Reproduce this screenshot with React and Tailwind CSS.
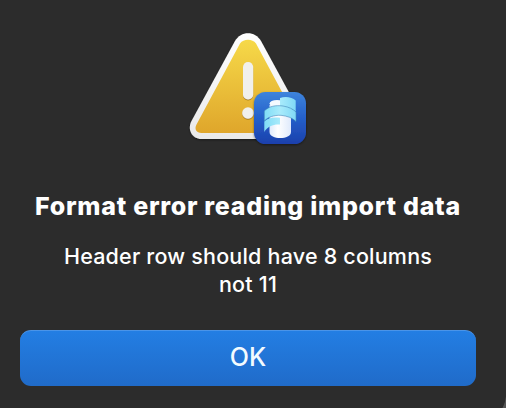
function WarningIcon() {
  return (
    <svg className="ml-1 block h-[130px] w-[140px]" viewBox="180 20 140 130" fill="none">
      <defs>
        <linearGradient id="frame" x1="0" y1="33" x2="0" y2="139" gradientUnits="userSpaceOnUse">
          <stop stopColor="#ffffff" />
          <stop offset="1" stopColor="#e9e9e9" />
        </linearGradient>
        <linearGradient id="yellow" x1="0" y1="40" x2="0" y2="133" gradientUnits="userSpaceOnUse">
          <stop stopColor="#f6d949" />
          <stop offset="1" stopColor="#dfa62b" />
        </linearGradient>
        <linearGradient id="badge" x1="0" y1="92" x2="0" y2="144" gradientUnits="userSpaceOnUse">
          <stop stopColor="#3d84dc" />
          <stop offset="0.5" stopColor="#2560ca" />
          <stop offset="1" stopColor="#1b40ac" />
        </linearGradient>
        <linearGradient id="cylinder" x1="269" y1="0" x2="291" y2="0" gradientUnits="userSpaceOnUse">
          <stop stopColor="#dce9fc" />
          <stop offset="0.4" stopColor="#ffffff" />
          <stop offset="1" stopColor="#dfeafc" />
        </linearGradient>
        <linearGradient id="ribbon" x1="264" y1="0" x2="296" y2="0" gradientUnits="userSpaceOnUse">
          <stop stopColor="#7fdcf6" />
          <stop offset="0.5" stopColor="#a9ebfb" />
          <stop offset="1" stopColor="#7fd8f6" />
        </linearGradient>
        <filter id="shadow" x="-20%" y="-20%" width="140%" height="140%">
          <feDropShadow dx="0" dy="1" stdDeviation="1.2" floodColor="#000000" floodOpacity="0.45" />
        </filter>
        <filter id="markShadow" x="-50%" y="-20%" width="200%" height="140%">
          <feDropShadow dx="0" dy="1" stdDeviation="0.7" floodColor="#8a6410" floodOpacity="0.7" />
        </filter>
      </defs>

      {/* Triangle */}
      <path
        d="M235 41C241 30.500 255 30.500 261 41L304 120C308 129.500 303 139 293.500 139H201.500C192 139 187 129.500 191.500 121Z"
        fill="url(#frame)"
        filter="url(#shadow)"
      />
      <path
        d="M240 43.500C243.500 38.500 252.500 38.500 256 43.500L299.500 124.500C301 129 298.500 133 294 133H201.500C196.500 133 194 129 196.500 124.500Z"
        fill="url(#yellow)"
      />
      <g fill="#f1f0ec" filter="url(#markShadow)">
        <rect x="243" y="62" width="10.200" height="37.500" rx="5.100" />
        <circle cx="248" cy="113" r="5.800" />
      </g>

      {/* App badge */}
      <rect x="254" y="92" width="52" height="52" rx="11.500" fill="url(#badge)" filter="url(#shadow)" />
      <path d="M269.500 105H291V132C291 140 269.500 140 269.500 132Z" fill="url(#cylinder)" />
      {/* White top face of the cylinder behind the ribbon */}
      <ellipse cx="277" cy="103.500" rx="7.500" ry="3.500" fill="#f4faff" />
      <g fill="url(#ribbon)">
        <path d="M264.300 132V121.500C267 118.500 273 117 280 117.800V124.500C274 124 268 125.500 264.300 132Z" />
        <path d="M280 98C286 96 292.500 97.500 295.700 100.500V111.500C291 108 286 106.500 280 106Z" />
        <path
          d="M264.300 121V111C269 106 276 105 283 106C289 107 293 109 296 112V121.500C292 117.500 287 116 281 115.300C274 115 268 117 264.300 121Z"
          stroke="#3f86b8"
          strokeWidth="0.600"
        />
      </g>
    </svg>
  );
}

export default function App() {
  return (
    <div className="relative h-[408px] w-[506px] overflow-hidden bg-[#2c2c2c] font-['Inter','Liberation_Sans',sans-serif] text-white">
      <div className="flex w-[496px] flex-col items-center px-5 pt-5">
        <WarningIcon />
        <h1 className="mt-10 whitespace-nowrap text-[25px] leading-8 font-extrabold tracking-[0.720px]">
          Format error reading import data
        </h1>
        <p className="mt-5 text-center text-[21.500px] leading-7 font-[450] tracking-[0.200px]">
          Header row should have 8 columns
          <br />
          not 11
        </p>
        <button className="mt-8 h-14 w-full rounded-[11px] border-t border-[#4a94e8] bg-linear-to-b from-[#237ee3] to-[#206bc9] pb-0.5 text-[25px] font-medium text-[#f2fbff]">
          OK
        </button>
      </div>

      {/* Rounded window corner */}
      <svg className="absolute right-0 bottom-0 h-3 w-1.5" viewBox="0 0 6 12" fill="none">
        <path d="M6 0.500C5.300 5 4.300 8.500 2.500 12H6Z" fill="#555555" />
      </svg>
    </div>
  );
}
